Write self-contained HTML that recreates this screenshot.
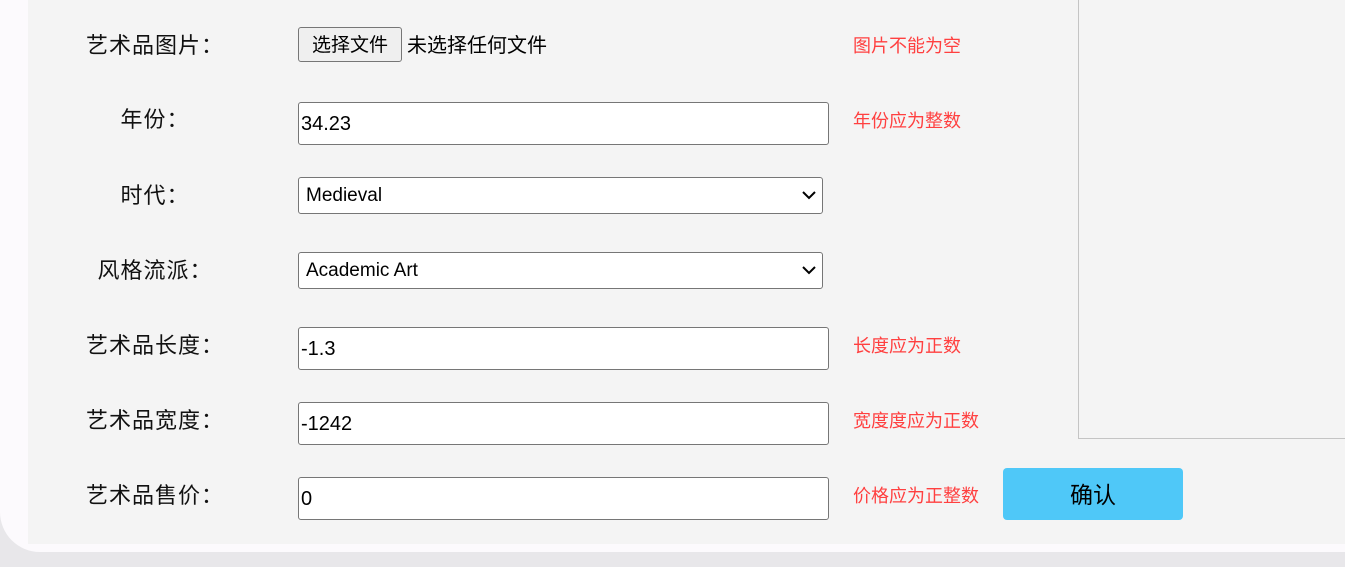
<!DOCTYPE html>
<html><head><meta charset="utf-8"><style>
*{margin:0;padding:0;box-sizing:border-box}
body{width:1345px;height:567px;overflow:hidden;background:#e8e7ea;position:relative;font-family:"Liberation Sans","Noto Sans CJK SC",sans-serif}
.outer{position:absolute;left:0;top:-60px;width:1400px;height:612px;background:#fcfafd;border-radius:0 0 0 40px}
.main{position:absolute;left:28px;top:0;width:1317px;height:544px;background:#f4f4f4}
.lab{position:absolute;width:140px;left:85px;text-align:center;font-size:22px;color:#111;line-height:30px;margin-top:1px;letter-spacing:1px}
.inp{position:absolute;left:298px;width:531px;height:43px;background:#fff;border:1px solid #767676;border-radius:3px;font-size:20px;line-height:43px;padding-left:2px;color:#000}
.sel{position:absolute;left:298px;width:525px;height:37px;background:#fff;border:1px solid #767676;border-radius:3px;font-size:19px;line-height:36px;padding-left:7px;color:#000}
.sel svg{position:absolute;right:6px;top:13px}
.err{position:absolute;left:853px;font-size:18px;color:#ff4040;line-height:24px;margin-top:0px}
</style></head><body>
<div class="outer"></div>
<div class="main"></div>
<div style="position:absolute;left:1078px;top:0;width:280px;height:439px;border-left:1px solid #c4c4c4;border-bottom:1px solid #c4c4c4"></div>

<div class="lab" style="top:30px">艺术品图片：</div>
<div style="position:absolute;left:298px;top:27px;width:104px;height:35px;background:#efefef;border:1px solid #767676;border-radius:3px;font-size:19px;line-height:35px;text-align:center">选择文件</div>
<div style="position:absolute;left:407px;top:32px;font-size:20px;line-height:28px">未选择任何文件</div>
<div class="err" style="top:34px">图片不能为空</div>

<div class="lab" style="top:104px">年份：</div>
<div class="inp" style="top:102px">34.23</div>
<div class="err" style="top:109px">年份应为整数</div>

<div class="lab" style="top:180px">时代：</div>
<div class="sel" style="top:177px">Medieval<svg width="14" height="9" viewBox="0 0 14 9"><path d="M1 1l6 6 6-6" stroke="#000" stroke-width="2" fill="none"/></svg></div>

<div class="lab" style="top:255px">风格流派：</div>
<div class="sel" style="top:252px">Academic Art<svg width="14" height="9" viewBox="0 0 14 9"><path d="M1 1l6 6 6-6" stroke="#000" stroke-width="2" fill="none"/></svg></div>

<div class="lab" style="top:330px">艺术品长度：</div>
<div class="inp" style="top:327px">-1.3</div>
<div class="err" style="top:334px">长度应为正数</div>

<div class="lab" style="top:405px">艺术品宽度：</div>
<div class="inp" style="top:402px">-1242</div>
<div class="err" style="top:409px">宽度度应为正数</div>

<div class="lab" style="top:480px">艺术品售价：</div>
<div class="inp" style="top:477px">0</div>
<div class="err" style="top:484px">价格应为正整数</div>

<div style="position:absolute;left:1003px;top:468px;width:180px;height:52px;background:#4fc8f8;border-radius:4px;font-size:23px;line-height:54px;text-align:center;color:#000">确认</div>
</body></html>
